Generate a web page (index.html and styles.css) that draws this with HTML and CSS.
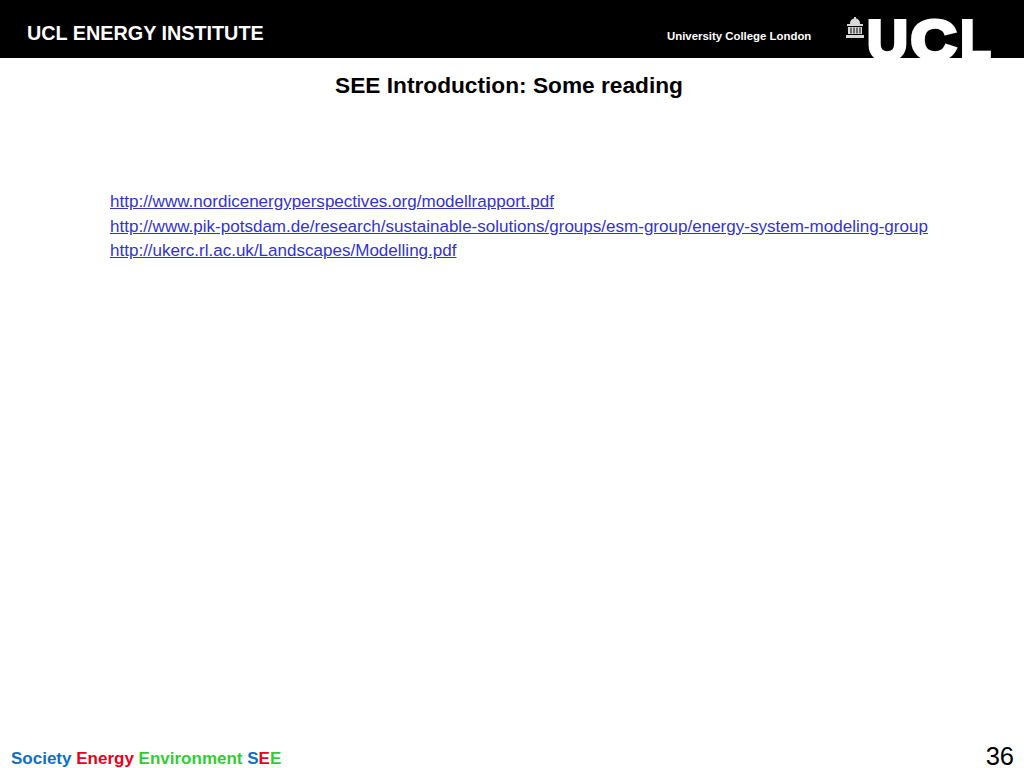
FILE: index.html
```html
<!DOCTYPE html>
<html lang="en">
<head>
<meta charset="utf-8">
<title>SEE Introduction: Some reading</title>
<link rel="stylesheet" href="styles.css">
</head>
<body>
<div class="slide">
  <header class="banner">
    <div class="institute">UCL ENERGY INSTITUTE</div>
    <div class="university">University College London</div>
    <svg class="logo" width="146" height="58" viewBox="0 0 146 58" aria-label="UCL">
      <g fill="#d8d8d8">
        <path d="M8 17h2v2h-2z"/>
        <path d="M4 24c0-4 2-5 5-6c3 1 5 2 5 6z"/>
        <path d="M1 24h16v2H1z"/>
        <path d="M2 27h14v7H2z"/>
        <path d="M0 35h18v3H0z"/>
      </g>
      <g fill="#000">
        <path d="M4.500 27.500h1v6h-1zM7.500 27.500h1v6h-1zM10.500 27.500h1v6h-1zM13.500 27.500h1v6h-1z"/>
      </g>
      <text class="logo-text" transform="translate(21.300 59)">U</text>
      <text class="logo-text" transform="translate(64.800 59) scale(1.130 1)">C</text>
      <text class="logo-text" transform="translate(114.400 59) scale(0.880 1)">L</text>
    </svg>
  </header>
  <h1 class="title">SEE Introduction: Some reading</h1>
  <ul class="links">
    <li><a href="#">http://www.nordicenergyperspectives.org/modellrapport.pdf</a></li>
    <li><a href="#">http://www.pik-potsdam.de/research/sustainable-solutions/groups/esm-group/energy-system-modeling-group</a></li>
    <li><a href="#">http://ukerc.rl.ac.uk/Landscapes/Modelling.pdf</a></li>
  </ul>
  <footer class="footer">
    <div class="tagline"><span class="blue">Society</span> <span class="red">Energy</span> <span class="green">Environment</span> <span class="blue">S</span><span class="red">E</span><span class="green">E</span></div>
    <div class="page">36</div>
  </footer>
</div>
</body>
</html>
```
FILE: styles.css
```css
html, body { margin: 0; padding: 0; background: #fff; }
body { font-family: "Liberation Sans", Arial, sans-serif; }
.slide {
  width: 1024px;
  height: 768px;
  display: flex;
  flex-direction: column;
  overflow: hidden;
}
.banner {
  height: 58px;
  flex: none;
  background: #000;
  color: #fff;
  display: flex;
  align-items: center;
  padding-left: 27px;
}
.institute { font-size: 19.800px; font-weight: 700; width: 640px; padding-top: 8px; white-space: nowrap; }
.university { font-size: 11.400px; font-weight: 700; width: 179px; padding-top: 13px; white-space: nowrap; }
.logo { flex: none; overflow: visible; }
.logo-text {
  font-family: "Liberation Sans", Arial, sans-serif;
  font-weight: 700;
  font-size: 56px;
  fill: #fff;
  stroke: #fff;
  stroke-width: 4px;
}
.title {
  margin: 14px 0 0;
  font-size: 22.700px;
  line-height: 26px;
  font-weight: 700;
  text-align: center;
  color: #000;
  padding-right: 6px;
}
.links {
  list-style: none;
  margin: 92px 0 0;
  padding: 0 0 0 110px;
  font-size: 17.040px;
  line-height: 24.500px;
  white-space: nowrap;
}
.links a { color: #3333cc; text-decoration: underline; }
.footer {
  margin-top: auto;
  height: 30px;
  display: flex;
  justify-content: space-between;
  align-items: flex-end;
  padding: 0 10px 0 11px;
}
.tagline { font-size: 17px; font-weight: 700; line-height: 19px; }
.page { font-size: 25.500px; line-height: 24px; color: #000; }
.blue { color: #0f6fc0; }
.red { color: #e8001c; }
.green { color: #33cc33; }
```
